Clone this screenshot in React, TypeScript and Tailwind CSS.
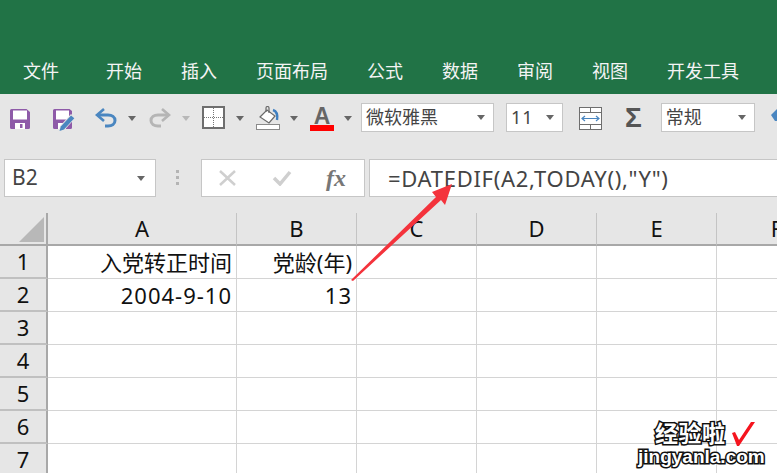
import React from 'react';

const cjk = 'font-["Noto_Sans","Noto_Sans_CJK_SC",sans-serif]';

const tabs = ['文件', '开始', '插入', '页面布局', '公式', '数据', '审阅', '视图', '开发工具'];
const columns = ['A', 'B', 'C', 'D', 'E', 'F'];
const rows: [number, string, string][] = [
  [1, '入党转正时间', '党龄(年)'],
  [2, '2004-9-10', '13'],
  [3, '', ''],
  [4, '', ''],
  [5, '', ''],
  [6, '', ''],
  [7, '', ''],
];

function Caret({ light = false }: { light?: boolean }) {
  return (
    <svg width="8" height="5" viewBox="0 0 8 5" className="shrink-0">
      <path d="M0 0h8L4 5z" fill={light ? '#b8b8b8' : '#666666'} />
    </svg>
  );
}

function SaveIcon() {
  return (
    <svg width="20" height="20" viewBox="0 0 20 20" className="shrink-0">
      <path d="M0 1.5A1.5 1.5 0 0 1 1.5 0h15L20 3v15.5a1.5 1.5 0 0 1-1.5 1.5h-17A1.5 1.5 0 0 1 0 18.5z" fill="#8e5aa8" />
      <rect x="3" y="1.500" width="14" height="9" fill="#ffffff" />
      <rect x="5" y="14" width="10" height="6" fill="#ffffff" />
      <rect x="10" y="15" width="2.500" height="4" fill="#8e5aa8" />
    </svg>
  );
}

function SaveAsIcon() {
  return (
    <svg width="23" height="23" viewBox="0 0 23 23" className="shrink-0">
      <path d="M0 1.5A1.5 1.5 0 0 1 1.5 0h15L19 2v16.5a1.5 1.5 0 0 1-1.5 1.5h-16A1.5 1.5 0 0 1 0 18.5z" fill="#8e5aa8" />
      <rect x="3" y="1.500" width="13" height="9" fill="#ffffff" />
      <rect x="5" y="14" width="8" height="6" fill="#ffffff" />
      <path d="M5.500 23l1.500-6L18 5l4.500 4L11 21.500z" fill="#e6e6e6" />
      <path d="M6.500 22l1.300-4.500L18 6.500l3.300 2.800L11 20.500z" fill="#4a86c0" />
    </svg>
  );
}

function UndoIcon({ color }: { color: string }) {
  return (
    <svg width="22" height="20" viewBox="0 0 22 20" fill="none" className="shrink-0">
      <path d="M9 1L2 7l7 6" stroke={color} strokeWidth="2.600" />
      <path d="M3 7h10c4 0 7 2 7 5.500S17 18 13 18h-3" stroke={color} strokeWidth="3" />
    </svg>
  );
}

function BorderIcon() {
  return (
    <svg width="23" height="23" viewBox="0 0 23 23" fill="none" className="shrink-0">
      <rect x="1" y="1" width="21" height="21" fill="#ffffff" stroke="#6e6e6e" strokeWidth="2" />
      <path d="M11.500 2v19M2 11.500h19" stroke="#777777" strokeWidth="1" strokeDasharray="1 1" />
    </svg>
  );
}

function FillIcon() {
  return (
    <svg width="24" height="24" viewBox="0 0 24 24" fill="none" className="shrink-0">
      <path d="M4 11l7-7 8 6-6 7z" fill="#ffffff" stroke="#6a6a6a" strokeWidth="1.200" />
      <path d="M10 6V2a1.500 1.500 0 0 1 3 0v5" stroke="#6a6a6a" strokeWidth="1.200" />
      <path d="M17 4c3 1 5 4 4 10" stroke="#3f7fc0" strokeWidth="2.400" />
      <rect x="0.500" y="18.500" width="23" height="5" fill="#ffffff" stroke="#8a8a8a" />
    </svg>
  );
}

function MergeIcon() {
  return (
    <svg width="23" height="23" viewBox="0 0 23 23" fill="none" className="shrink-0">
      <rect x="0.500" y="0.500" width="22" height="22" fill="#ffffff" stroke="#6e6e6e" />
      <path d="M1 5.500h21M1 17.500h21M11.500 1v4M11.500 18v4" stroke="#6e6e6e" />
      <path d="M3 11.500h17M6 9l-3 2.500L6 14M17 9l3 2.500L17 14" stroke="#4a86c0" strokeWidth="1.200" />
    </svg>
  );
}

function SelectBox({ label, className }: { label: string; className: string }) {
  return (
    <div className={`flex h-[29px] shrink-0 items-center justify-between border-[1.500px] border-[#c6c6c6] bg-white pl-[4px] pr-[8px] text-[18px] text-[#444444] ${className}`}>
      <span>{label}</span>
      <Caret />
    </div>
  );
}

function RedoIcon() {
  return (
    <div className="-scale-x-100">
      <UndoIcon color="#b5b5b5" />
    </div>
  );
}

function Toolbar() {
  return (
    <div className="flex h-[51px] items-start pt-[9px]">
      <div className="ml-[10px] mt-[6px]"><SaveIcon /></div>
      <div className="ml-[23px] mt-[6px]"><SaveAsIcon /></div>
      <div className="ml-[19px] mt-[5px]"><UndoIcon color="#4a86c0" /></div>
      <div className="ml-[11px] mt-[13px]"><Caret /></div>
      <div className="ml-[13px] mt-[5px]"><RedoIcon /></div>
      <div className="ml-[11px] mt-[13px]"><Caret light /></div>
      <div className="ml-[12px] mt-[3px]"><BorderIcon /></div>
      <div className="ml-[11px] mt-[13px]"><Caret /></div>
      <div className="ml-[12px] mt-[3px]"><FillIcon /></div>
      <div className="ml-[10px] mt-[13px]"><Caret /></div>
      <div className="ml-[12px] mt-[4px] flex w-[24px] flex-col items-center">
        <span className="font-['Liberation_Sans',sans-serif] text-[23px] font-bold leading-[18px] text-[#666666]">A</span>
        <div className="h-[6px] w-[24px] bg-[#ff0000]" />
      </div>
      <div className="ml-[10px] mt-[13px]"><Caret /></div>
      <SelectBox label="微软雅黑" className="ml-[9px] w-[133px]" />
      <SelectBox label="11" className="ml-[12px] w-[57px] tracking-[1px]" />
      <div className="ml-[16px] mt-[4px]"><MergeIcon /></div>
      <span className="ml-[23px] mt-[-3px] w-[18px] font-['Liberation_Sans',sans-serif] text-[28px] font-bold leading-[36px] text-[#555555]">Σ</span>
      <SelectBox label="常规" className="ml-[19px] w-[94px]" />
      <svg width="10" height="18" viewBox="0 0 10 18" className="ml-[16px] mt-[6px] shrink-0">
        <path d="M0 6l6-6h4v12H4z" fill="#4a86c0" />
      </svg>
    </div>
  );
}

function FormulaBar() {
  return (
    <div className="flex h-[51px] items-start pl-[4px] pt-[14px]">
      <div className="flex h-[38px] w-[152px] items-center justify-between border-[1.500px] border-[#c6c6c6] bg-white pl-[7px] pr-[10px] text-[21px] text-[#444444]">
        <span>B2</span>
        <Caret />
      </div>
      <div className="ml-[20px] mr-[22px] mt-[11px] flex flex-col gap-[3px]">
        <div className="h-[3px] w-[3px] bg-[#b4b4b4]" />
        <div className="h-[3px] w-[3px] bg-[#b4b4b4]" />
        <div className="h-[3px] w-[3px] bg-[#b4b4b4]" />
      </div>
      <div className="flex h-[38px] w-[164px] items-center border-[1.500px] border-[#c6c6c6] bg-white pl-[17px]">
        <svg width="18" height="16" viewBox="0 0 18 16" fill="none" className="shrink-0">
          <path d="M1 1l15 14M16 1L1 15" stroke="#cfcfcf" strokeWidth="2.500" />
        </svg>
        <svg width="20" height="16" viewBox="0 0 20 16" fill="none" className="ml-[35px] shrink-0">
          <path d="M2 8l6 6L18 2" stroke="#cfcfcf" strokeWidth="3.500" />
        </svg>
        <span className="ml-[34px] font-['Liberation_Serif',serif] text-[24px] font-bold italic leading-none text-[#777777]">fx</span>
      </div>
      <div className="ml-[4px] flex h-[38px] flex-1 items-center border-y-[1.500px] border-l-[1.500px] border-[#c6c6c6] bg-white pl-[18px] text-[22px] tracking-[0.7px] text-[#444444]">
        =DATEDIF(A2,TODAY(),"Y")
      </div>
    </div>
  );
}

function Sheet() {
  return (
    <div className="mt-[17px] grid grid-cols-[48px_189px_120px_120px_120px_120px_120px] text-[22px] text-[#111111]">
      <div className="relative h-[33px] border-b-2 border-r-2 border-[#a8a8a8] bg-[#e6e6e6]">
        <svg width="25" height="25" viewBox="0 0 25 25" className="absolute bottom-[2px] right-[2px]">
          <path d="M25 0v25H0z" fill="#b8b8b8" />
        </svg>
      </div>
      {columns.map((c) => (
        <div key={c} className="flex h-[33px] items-center justify-center border-b-2 border-r border-b-[#a8a8a8] border-r-[#c4c4c4] bg-[#e6e6e6]">
          {c}
        </div>
      ))}
      {rows.map(([n, a, b]) => (
        <React.Fragment key={n}>
          <div className="flex h-[33px] items-center justify-center border-b-2 border-r-2 border-b-[#c0c0c0] border-r-[#a8a8a8] bg-[#e6e6e6]">{n}</div>
          <div className="flex h-[33px] items-center justify-end border-b border-r border-[#d4d4d4] bg-white pr-[4px]">
            <span className={n === 2 ? 'tracking-[1px]' : ''}>{a}</span>
          </div>
          <div className="flex h-[33px] items-center justify-end border-b border-r border-[#d4d4d4] bg-white pr-[4px]">
            <span className={n === 2 ? 'tracking-[1px]' : ''}>{b}</span>
          </div>
          {columns.slice(2).map((c) => (
            <div key={c} className="h-[33px] border-b border-r border-[#d4d4d4] bg-white" />
          ))}
        </React.Fragment>
      ))}
    </div>
  );
}

export default function App() {
  return (
    <div className={`relative h-[473px] w-[777px] overflow-hidden bg-[#e6e6e6] ${cjk}`}>
      <div className="flex h-[94px] items-end gap-[39px] bg-[#217346] pb-[9px] pl-[23px] text-[18px] leading-[28px] text-[#f4f4f4]">
        {tabs.map((t, i) => (
          <span key={t} className={i === 0 ? 'mr-[8px] shrink-0' : 'shrink-0'}>{t}</span>
        ))}
      </div>
      <Toolbar />
      <FormulaBar />
      <Sheet />

      {/* red callout arrow over the formula bar */}
      <svg width="777" height="473" className="pointer-events-none absolute left-0 top-0">
        <path d="M351 280L436 197 432 192 452 184 445 205 441 200 353 281z" fill="#f4333c" />
      </svg>

      {/* site stamp in the corner */}
      <div className="absolute left-[638px] top-[421px] flex flex-col items-start font-['Liberation_Sans','Noto_Sans_CJK_SC',sans-serif] font-bold text-white [paint-order:stroke_fill] [-webkit-text-stroke:3px_#111111]">
        <div className="ml-[17px] flex items-center">
          <span className="text-[23px] leading-[26px] tracking-[0.5px]">经验啦</span>
          <svg width="23" height="24" viewBox="0 0 23 24" fill="none" className="ml-[6px]">
            <path d="M0 11l3-1 4 8L19 0h4L7 24H5z" fill="#f5141e" />
          </svg>
        </div>
        <span className="text-[19px] leading-[20px]">jingyanla.com</span>
      </div>
    </div>
  );
}
